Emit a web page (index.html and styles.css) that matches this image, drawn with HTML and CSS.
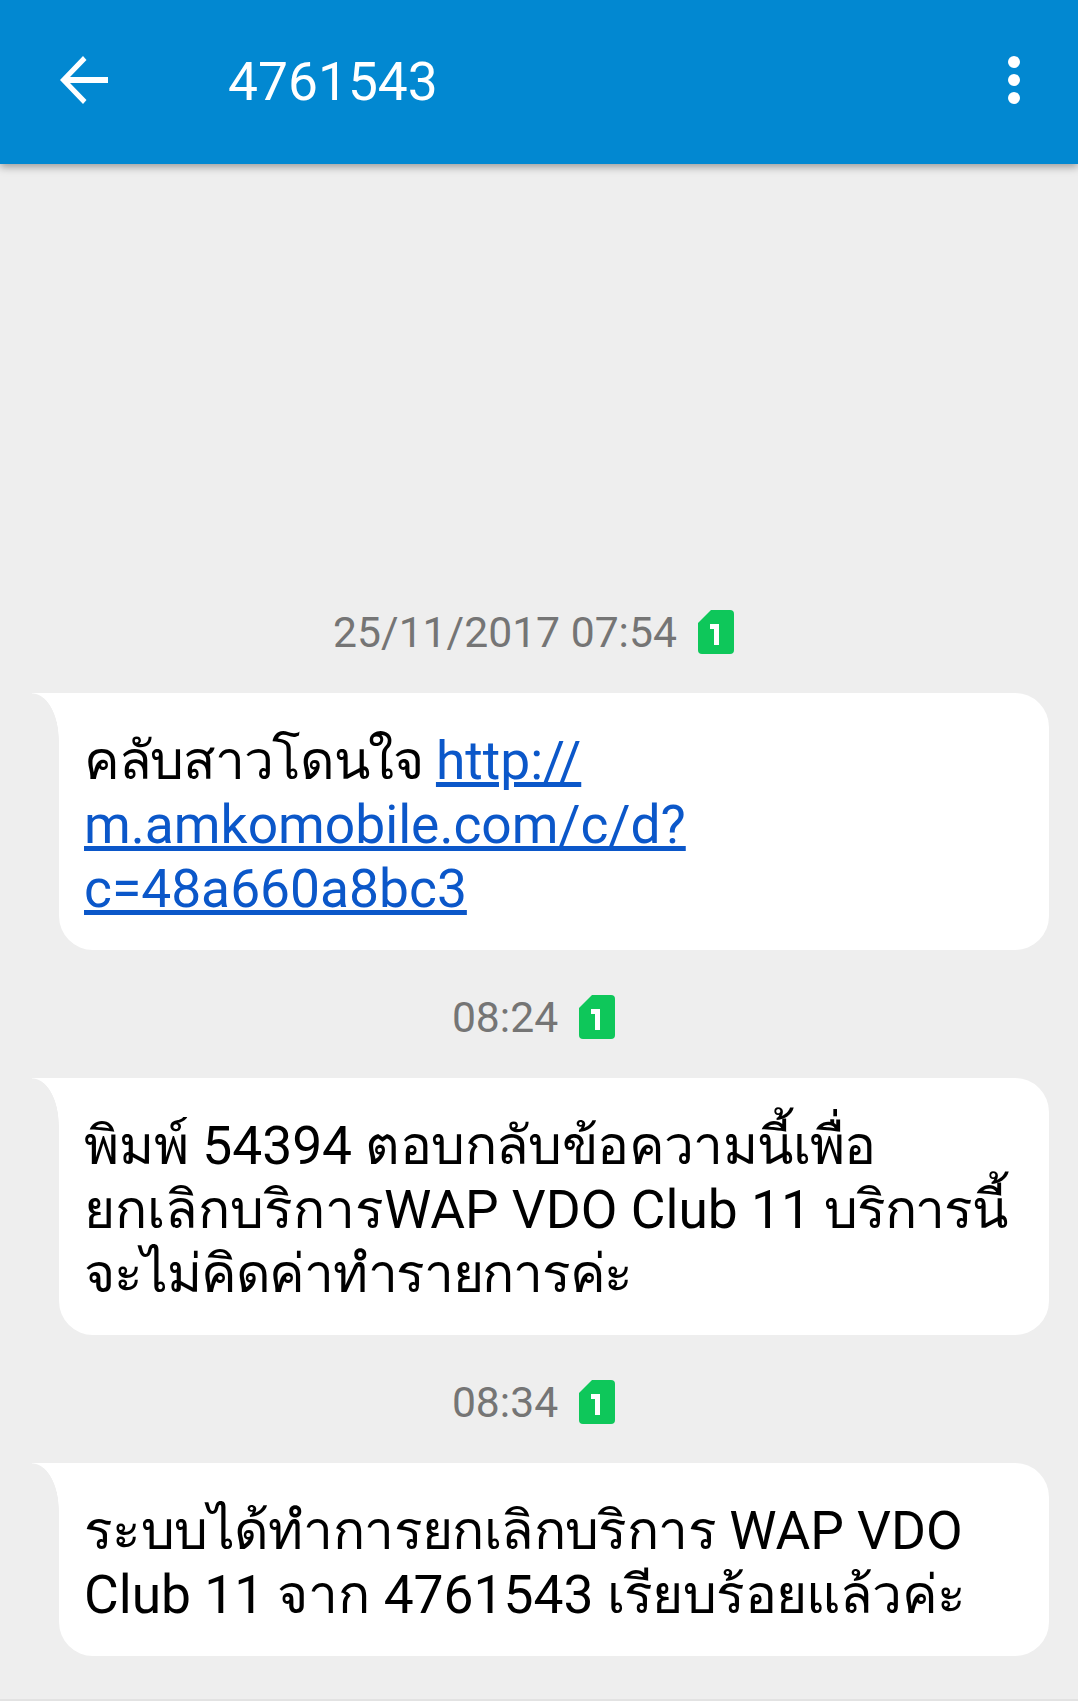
FILE: index.html

```html
<!DOCTYPE html>
<html>
<head>
    <meta charset="UTF-8">
    <title>4761543</title>
    <link rel="stylesheet" href="styles.css">
</head>
<body>
    <!-- top bar -->
    <header class="appbar">
        <svg class="back" viewBox="0 0 48 48" width="48" height="48">
            <path d="M48 21H10L26.500 4L23 0L0 24L23 48L26.500 44L10 27H48Z" fill="#ffffff"/>
        </svg>
        <div class="title">4761543</div>
        <svg class="more" viewBox="0 0 14 48" width="14" height="48">
            <circle cx="7" cy="6" r="6" fill="#ffffff"/>
            <circle cx="7" cy="24" r="6" fill="#ffffff"/>
            <circle cx="7" cy="42" r="6" fill="#ffffff"/>
        </svg>
    </header>

    <main class="thread">
        <div class="stamp">
            <span>25/11/2017 07:54</span>
            <svg class="sim" viewBox="0 0 36 44" width="36" height="44">
                <path d="M13 0H32Q36 0 36 4V40Q36 44 32 44H4Q0 44 0 40V13Z" fill="#0ec75a"/>
                <path d="M12 14H21V35H16V19H12Z" fill="#ffffff"/>
            </svg>
        </div>
        <div class="bubble">
            <span class="th-tight">คลับสาวโดนใจ</span> <a href="#">http://<br>m.amkomobile.com/c/d?<br>c=48a660a8bc3</a>
        </div>

        <div class="stamp">
            <span>08:24</span>
            <svg class="sim" viewBox="0 0 36 44" width="36" height="44">
                <path d="M13 0H32Q36 0 36 4V40Q36 44 32 44H4Q0 44 0 40V13Z" fill="#0ec75a"/>
                <path d="M12 14H21V35H16V19H12Z" fill="#ffffff"/>
            </svg>
        </div>
        <div class="bubble">
            พิมพ์ 54394 <span class="th-slim">ตอบกลับข้อความนี้เพื่อ</span><br>ยกเลิกบริการWAP VDO Club 11 <span class="th-tight">บริการนี้</span><br><span class="th-tight">จะไม่คิดค่าทำรายการค่ะ</span>
        </div>

        <div class="stamp">
            <span>08:34</span>
            <svg class="sim" viewBox="0 0 36 44" width="36" height="44">
                <path d="M13 0H32Q36 0 36 4V40Q36 44 32 44H4Q0 44 0 40V13Z" fill="#0ec75a"/>
                <path d="M12 14H21V35H16V19H12Z" fill="#ffffff"/>
            </svg>
        </div>
        <div class="bubble">
            <span class="th-slim">ระบบได้ทำการยกเลิกบริการ</span> WAP VDO<br>Club 11 จาก 4761543 <span class="th-slim">เรียบร้อยแล้วค่ะ</span>
        </div>
    </main>
</body>
</html>
```

FILE: styles.css

```css
html, body {
    height: 100%;
}
body {
    margin: 0;
    background-color: #eeeeee;
    border-bottom: 2px solid #e2e2e2;
    box-sizing: border-box;
    font-family: Roboto, "Noto Sans", sans-serif;
    overflow: hidden;
}
.appbar {
    display: flex;
    align-items: center;
    height: 164px;
    padding: 0 57px 4px 60px;
    box-sizing: border-box;
    background-color: #0288d1;
    box-shadow: 0 3px 8px rgba(0, 0, 0, 0.35);
    color: #ffffff;
}
.title {
    flex: 1;
    margin-left: 120px;
    padding-top: 4px;
    font-size: 53.33px;
    line-height: 64px;
}
.thread {
    padding: 446px 29px 0 59px;
}
.stamp {
    display: flex;
    justify-content: center;
    align-items: center;
    gap: 21px;
    height: 44px;
    padding-right: 41px;
    margin-bottom: 39px;
    color: #757575;
    font-size: 42.67px;
}
.bubble {
    position: relative;
    padding: 36px 25px 29px;
    margin-bottom: 45px;
    background-color: #ffffff;
    border-radius: 0 34px 34px 34px;
    color: #000000;
    font-size: 53.33px;
    line-height: 64px;
    white-space: nowrap;
}
/* tail at the top left of each bubble */
.bubble::before {
    content: "";
    position: absolute;
    left: -27px;
    top: 0;
    width: 27px;
    height: 47px;
    background: radial-gradient(ellipse 27px 47px at 0 47px, transparent 98%, #ffffff 100%);
}
.bubble a {
    color: #0b57c9;
    text-decoration: underline;
}
/* thai runs sit a bit narrower in the reference font */
.th-tight {
    letter-spacing: -1.3px;
}
.th-slim {
    letter-spacing: -0.6px;
}
```
